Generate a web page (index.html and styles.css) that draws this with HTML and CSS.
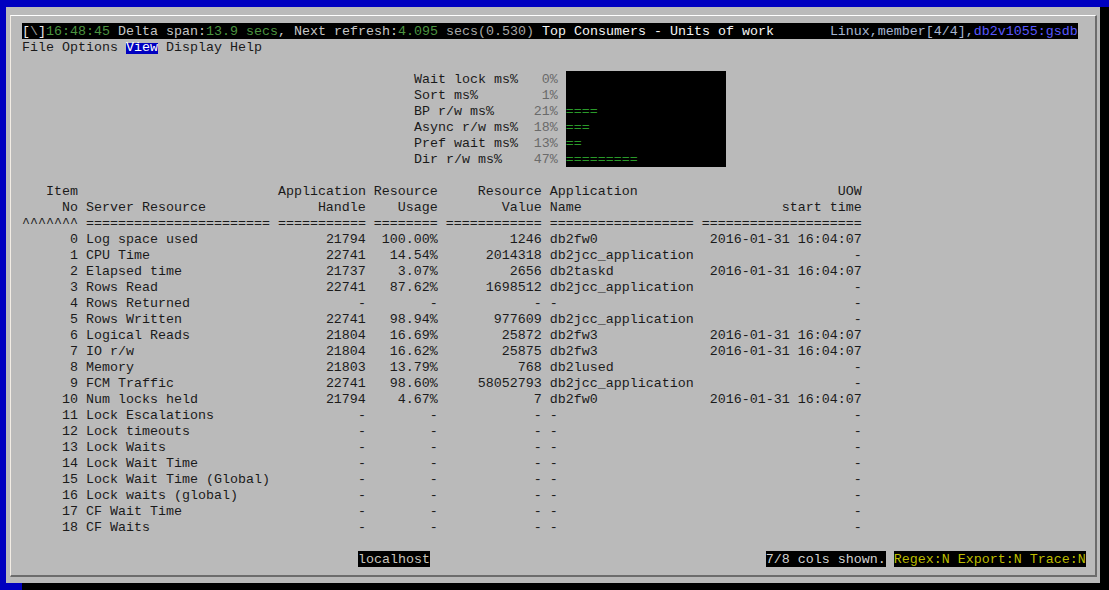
FILE: index.html
```html
<!DOCTYPE html>
<html>
<head>
<meta charset="utf-8">
<title>db2top - Top Consumers</title>
<link rel="stylesheet" href="styles.css">
</head>
<body>
<div class="desk">
  <div class="win">
    <div class="panel">
      <div class="line titlebar"><span class="br">[</span><span class="bs">\</span><span class="br">]</span><span class="grn">16:48:45</span><span class="lt"> Delta span:</span><span class="grn">13.9 secs</span><span class="lt">, Next refresh:</span><span class="grn">4.095</span><span class="md"> secs(0.530)</span><span class="wh"> Top Consumers - Units of work       </span><span class="host">Linux,member[4/4],</span><span class="db">db2v1055:gsdb</span></div>
      <div class="line menu">File Options <span class="sel">View</span> Display Help</div>
      <div class="line"></div>

      <div class="waits">
        <div class="wrow"><span class="wl">Wait lock ms%</span><span class="wv">0%</span><span class="wb"></span></div>
        <div class="wrow"><span class="wl">Sort ms%</span><span class="wv">1%</span><span class="wb"></span></div>
        <div class="wrow"><span class="wl">BP r/w ms%</span><span class="wv">21%</span><span class="wb">====</span></div>
        <div class="wrow"><span class="wl">Async r/w ms%</span><span class="wv">18%</span><span class="wb">===</span></div>
        <div class="wrow"><span class="wl">Pref wait ms%</span><span class="wv">13%</span><span class="wb">==</span></div>
        <div class="wrow"><span class="wl">Dir r/w ms%</span><span class="wv">47%</span><span class="wb">=========</span></div>
      </div>
      <div class="line"></div>

      <div class="tbl">
        <div class="row"><span class="r">Item</span><span></span><span class="r">Application</span><span class="r">Resource</span><span class="r">Resource</span><span>Application</span><span class="r">UOW</span></div>
        <div class="row"><span class="r">No</span><span>Server Resource</span><span class="r">Handle</span><span class="r">Usage</span><span class="r">Value</span><span>Name</span><span class="r">start time</span></div>
        <div class="row"><span>^^^^^^^</span><span>=======================</span><span>===========</span><span>========</span><span>============</span><span>==================</span><span>====================</span></div>

        <div class="row"><span class="r">0</span><span>Log space used</span><span class="r">21794</span><span class="r">100.00%</span><span class="r">1246</span><span>db2fw0</span><span class="r">2016-01-31 16:04:07</span></div>
        <div class="row"><span class="r">1</span><span>CPU Time</span><span class="r">22741</span><span class="r">14.54%</span><span class="r">2014318</span><span>db2jcc_application</span><span class="r">-</span></div>
        <div class="row"><span class="r">2</span><span>Elapsed time</span><span class="r">21737</span><span class="r">3.07%</span><span class="r">2656</span><span>db2taskd</span><span class="r">2016-01-31 16:04:07</span></div>
        <div class="row"><span class="r">3</span><span>Rows Read</span><span class="r">22741</span><span class="r">87.62%</span><span class="r">1698512</span><span>db2jcc_application</span><span class="r">-</span></div>
        <div class="row"><span class="r">4</span><span>Rows Returned</span><span class="r">-</span><span class="r">-</span><span class="r">-</span><span>-</span><span class="r">-</span></div>
        <div class="row"><span class="r">5</span><span>Rows Written</span><span class="r">22741</span><span class="r">98.94%</span><span class="r">977609</span><span>db2jcc_application</span><span class="r">-</span></div>
        <div class="row"><span class="r">6</span><span>Logical Reads</span><span class="r">21804</span><span class="r">16.69%</span><span class="r">25872</span><span>db2fw3</span><span class="r">2016-01-31 16:04:07</span></div>
        <div class="row"><span class="r">7</span><span>IO r/w</span><span class="r">21804</span><span class="r">16.62%</span><span class="r">25875</span><span>db2fw3</span><span class="r">2016-01-31 16:04:07</span></div>
        <div class="row"><span class="r">8</span><span>Memory</span><span class="r">21803</span><span class="r">13.79%</span><span class="r">768</span><span>db2lused</span><span class="r">-</span></div>
        <div class="row"><span class="r">9</span><span>FCM Traffic</span><span class="r">22741</span><span class="r">98.60%</span><span class="r">58052793</span><span>db2jcc_application</span><span class="r">-</span></div>
        <div class="row"><span class="r">10</span><span>Num locks held</span><span class="r">21794</span><span class="r">4.67%</span><span class="r">7</span><span>db2fw0</span><span class="r">2016-01-31 16:04:07</span></div>
        <div class="row"><span class="r">11</span><span>Lock Escalations</span><span class="r">-</span><span class="r">-</span><span class="r">-</span><span>-</span><span class="r">-</span></div>
        <div class="row"><span class="r">12</span><span>Lock timeouts</span><span class="r">-</span><span class="r">-</span><span class="r">-</span><span>-</span><span class="r">-</span></div>
        <div class="row"><span class="r">13</span><span>Lock Waits</span><span class="r">-</span><span class="r">-</span><span class="r">-</span><span>-</span><span class="r">-</span></div>
        <div class="row"><span class="r">14</span><span>Lock Wait Time</span><span class="r">-</span><span class="r">-</span><span class="r">-</span><span>-</span><span class="r">-</span></div>
        <div class="row"><span class="r">15</span><span>Lock Wait Time (Global)</span><span class="r">-</span><span class="r">-</span><span class="r">-</span><span>-</span><span class="r">-</span></div>
        <div class="row"><span class="r">16</span><span>Lock waits (global)</span><span class="r">-</span><span class="r">-</span><span class="r">-</span><span>-</span><span class="r">-</span></div>
        <div class="row"><span class="r">17</span><span>CF Wait Time</span><span class="r">-</span><span class="r">-</span><span class="r">-</span><span>-</span><span class="r">-</span></div>
        <div class="row"><span class="r">18</span><span>CF Waits</span><span class="r">-</span><span class="r">-</span><span class="r">-</span><span>-</span><span class="r">-</span></div>
      </div>
      <div class="line"></div>

      <div class="line status"><span class="tag loc">localhost</span><span class="tag cols">7/8 cols shown.</span><span class="tag flags">Regex:N Export:N Trace:N</span></div>
    </div>
  </div>
  <div class="foot"><span class="foot-blue"></span></div>
</div>
</body>
</html>
```

FILE: styles.css
```css
html, body {
  margin: 0;
  padding: 0;
  background: #000;
}

.desk {
  width: 1103px;
  height: 583px;
  border-top: 7px solid #0000c0;
  border-left: 6px solid #0000c0;
  background: #000;
}

.win {
  width: 1094px;
  height: 576px;
  box-sizing: border-box;
  padding: 8px 3px 0 4px;
  background: #bababa;
}

.panel {
  width: 1087px;
  height: 562px;
  box-sizing: border-box;
  border-top: 1px solid #ffffff;
  border-left: 1px solid #f2ece4;
  border-right: 2px solid #6c6c6c;
  border-bottom: 2px solid #6c6c6c;
  padding: 7px 0 0 11px;
  font-family: "Liberation Mono", "DejaVu Sans Mono", monospace;
  font-size: 13.3333px;
  line-height: 18px;
  color: #1a1a1a;
}

.foot {
  height: 7px;
  margin-left: -6px;
  display: flex;
}

.foot-blue {
  width: 22px;
  height: 7px;
  background: #0000c0;
}

.line {
  height: 16px;
  white-space: pre;
}

/* title bar */
.titlebar {
  width: 132ch;
  background: #000;
}
.br { color: #e8e8e8; }
.bs { color: #9a9a9a; }
.grn { color: #4c9440; }
.lt { color: #c6c6c6; }
.md { color: #a8a8a8; }
.wh { color: #f4f4f4; }
.host { color: #a6b6d2; }
.db { color: #5858ff; }

/* menu */
.sel {
  display: inline-block;
  height: 16px;
  vertical-align: top;
  color: #ffffff;
  background: linear-gradient(to bottom, transparent 4px, #0000c0 4px, #0000c0 15px, transparent 15px);
}

/* waits */
.waits {
  margin-left: 49ch;
}
.wrow {
  display: flex;
  height: 16px;
  white-space: pre;
}
.wl {
  width: 13ch;
}
.wv {
  width: 5ch;
  text-align: right;
  color: #6a6a6a;
}
.wb {
  width: 20ch;
  height: 16px;
  margin-left: 1ch;
  background: #000;
  color: #2a9a2a;
}

/* table */
.row {
  display: grid;
  grid-template-columns: 7ch 23ch 11ch 8ch 12ch 18ch 20ch;
  column-gap: 1ch;
  height: 16px;
  white-space: pre;
}
.r {
  text-align: right;
}

/* status line */
.status {
  display: flex;
}
.tag {
  height: 16px;
  background: #000;
}
.loc {
  margin-left: 42ch;
  color: #c8c4bc;
}
.cols {
  margin-left: 42ch;
  color: #d2d2d2;
}
.flags {
  margin-left: 1ch;
  color: #bcbc00;
}
```
